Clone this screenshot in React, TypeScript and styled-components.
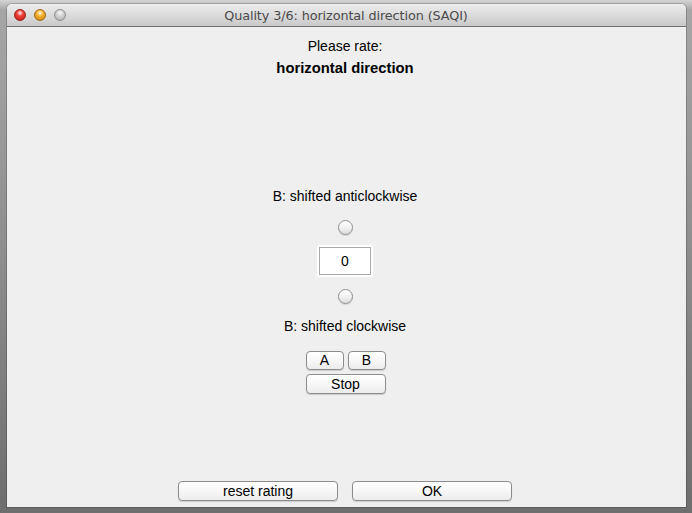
import React from "react";
import styled, { createGlobalStyle } from "styled-components";

const Global = createGlobalStyle`
  html, body { margin: 0; padding: 0; }
  body {
    width: 692px;
    height: 513px;
    overflow: hidden;
    background: linear-gradient(to bottom, #d4d4d4 0px, #a6a6a6 10px, #909090 45%, #6e6e6e 100%);
    font-family: "Liberation Sans", Arial, sans-serif;
  }
`;

const Window = styled.div`
  margin: 4px 6px 0 7px;
  width: 679px;
  height: 503px;
  display: flex;
  flex-direction: column;
  border-radius: 5px 5px 0 0;
  overflow: hidden;
  background: #efefef;
  box-shadow: 0 0 0 1px rgba(0,0,0,0.18);
`;

const TitleBar = styled.div`
  position: relative;
  height: 22px;
  flex: none;
  display: flex;
  align-items: center;
  justify-content: center;
  background: linear-gradient(to bottom, #ececec 0%, #dcdcdc 50%, #c9c9c9 100%);
  border-bottom: 1px solid #6f6f6f;
`;

const Lights = styled.div`
  position: absolute;
  left: 7px;
  top: 5px;
  display: flex;
  gap: 8px;
`;

const Light = styled.span<{ $c1: string; $c2: string; $b: string }>`
  width: 12px;
  height: 12px;
  border-radius: 50%;
  box-sizing: border-box;
  border: 1px solid ${p => p.$b};
  background: radial-gradient(circle at 50% 30%, #ffffffcc 0, ${p => p.$c1} 35%, ${p => p.$c2} 100%);
`;

const Title = styled.div`
  font-family: "DejaVu Sans", sans-serif;
  font-size: 12.8px;
  color: #4a4a4a;
  padding-right: 1px;
  letter-spacing: -0.1px;
`;

const Content = styled.div`
  flex: 1;
  display: flex;
  flex-direction: column;
  align-items: center;
  padding: 0 3px 5px 0;
`;

const Label = styled.div<{ $bold?: boolean; $mt: number }>`
  font-size: ${p => (p.$bold ? 14.8 : 14)}px;
  line-height: 16px;
  color: #000;
  font-weight: ${p => (p.$bold ? 700 : 400)};
  margin-top: ${p => p.$mt}px;
`;

const Radio = styled.span<{ $mt: number }>`
  display: block;
  width: 15px;
  height: 15px;
  box-sizing: border-box;
  border-radius: 50%;
  border: 1px solid #8e8e8e;
  background: linear-gradient(to bottom, #ffffff 0%, #f2f2f2 50%, #dcdcdc 100%);
  box-shadow: 0 1px 1px rgba(0,0,0,0.12);
  margin-top: ${p => p.$mt}px;
`;

const ValueBox = styled.div`
  margin-top: 10px;
  width: 56px;
  height: 32px;
  box-sizing: border-box;
  border: 2px solid #ffffff;
  display: flex;
`;

const ValueInner = styled.div`
  flex: 1;
  border: 1px solid #a9a9a9;
  background: #fff;
  display: flex;
  align-items: center;
  justify-content: center;
  font-size: 14px;
  color: #000;
`;

const ButtonGrid = styled.div`
  margin-top: 17px;
  display: grid;
  grid-template-columns: 38px 38px;
  column-gap: 4px;
  row-gap: 4px;
  margin-left: 1px;
`;

const Button = styled.button<{ $span?: boolean; $h: number }>`
  grid-column: ${p => (p.$span ? "1 / span 2" : "auto")};
  height: ${p => p.$h}px;
  box-sizing: border-box;
  padding: 0;
  border: 1px solid #8c8c8c;
  border-radius: 4px;
  background: linear-gradient(to bottom, #ffffff 0%, #f7f7f7 50%, #ececec 100%);
  box-shadow: 0 1px 1px rgba(0,0,0,0.15);
  font-family: "Liberation Sans", Arial, sans-serif;
  font-size: 14px;
  line-height: 15px;
  color: #000;
`;

const Footer = styled.div`
  margin-top: auto;
  display: grid;
  grid-template-columns: 160px 160px;
  column-gap: 14px;
  margin-bottom: 1px;
`;

export default function App() {
  return (
    <>
      <Global />
      <Window>
        <TitleBar>
          <Lights>
            <Light $c1="#f0453d" $c2="#b8160e" $b="#9b1f1a" />
            <Light $c1="#f7b631" $c2="#c07a0e" $b="#a06a1a" />
            <Light $c1="#d6d6d6" $c2="#a9a9a9" $b="#8d8d8d" />
          </Lights>
          <Title>Quality 3/6: horizontal direction (SAQI)</Title>
        </TitleBar>
        <Content>
          <Label $mt={11}>Please rate:</Label>
          <Label $bold $mt={6}>horizontal direction</Label>
          <Label $mt={112}>B: shifted anticlockwise</Label>
          <Radio $mt={16} />
          <ValueBox>
            <ValueInner>0</ValueInner>
          </ValueBox>
          <Radio $mt={12} />
          <Label $mt={14}>B: shifted clockwise</Label>
          <ButtonGrid>
            <Button $h={19}>A</Button>
            <Button $h={19}>B</Button>
            <Button $span $h={20}>Stop</Button>
          </ButtonGrid>
          <Footer>
            <Button $h={20}>reset rating</Button>
            <Button $h={20}>OK</Button>
          </Footer>
        </Content>
      </Window>
    </>
  );
}
